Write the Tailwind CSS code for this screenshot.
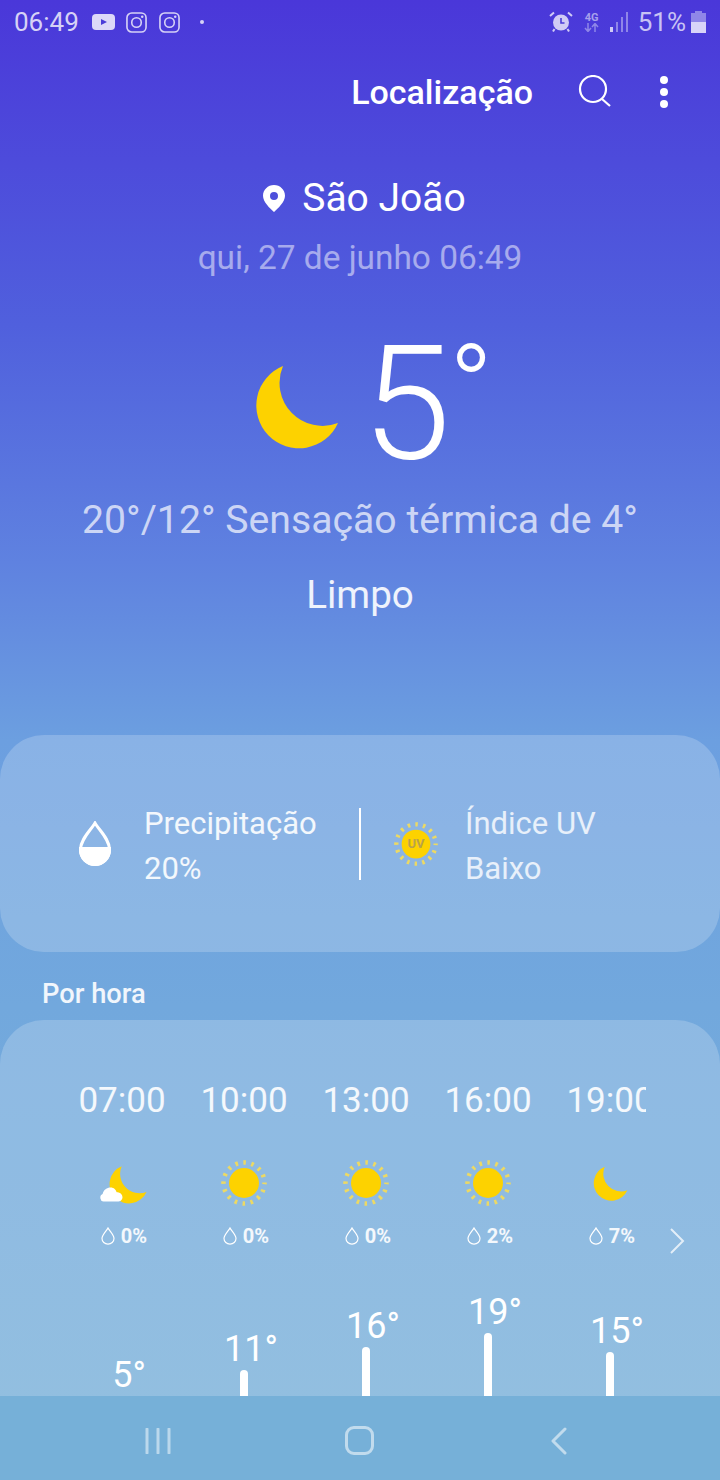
<!DOCTYPE html>
<html lang="pt">
  <head>
    <meta charset="UTF-8" />
    <title>Localização</title>
    <script src="https://cdn.jsdelivr.net/npm/@tailwindcss/browser@4"></script>
  </head>
  <body class="font-['Roboto',sans-serif] text-white">
    <svg class="hidden">
      <defs>
        <symbol id="sun" viewBox="0 0 48 48">
          <circle cx="24" cy="24" r="20.5" fill="none" stroke="#ecd964" stroke-width="4.5" stroke-dasharray="2.6 5.45" stroke-dashoffset="1.3" />
          <circle cx="24" cy="24" r="15" fill="#fdd200" />
        </symbol>
        <symbol id="moon" viewBox="-2 -1 84 85">
          <path d="M26 1A42.700 42.700 0 1 0 81 58A43 43 0 0 1 26 1Z" fill="#fdd200" />
        </symbol>
        <symbol id="drop" viewBox="0 0 14 18">
          <path d="M7 1C5.500 4 1 8 1 11.500A6 5.600 0 0 0 13 11.500C13 8 8.500 4 7 1Z" fill="none" stroke="white" stroke-width="1.200" />
        </symbol>
        <symbol id="insta" viewBox="0 0 22 22">
          <rect x="1" y="1" width="20" height="20" rx="5" fill="none" stroke="#d6d2f6" stroke-width="1.700" />
          <circle cx="11" cy="11" r="5" fill="none" stroke="#d6d2f6" stroke-width="1.700" />
          <circle cx="17" cy="5" r="1.300" fill="#d6d2f6" />
        </symbol>
      </defs>
    </svg>

    <div class="relative w-[720px] h-[1480px] overflow-hidden flex flex-col bg-[linear-gradient(180deg,#4a37d9_0%,#5060dd_22%,#5f82e0_38%,#6c9fe0_50%,#72a8dd_68%,#78b0d8_100%)]">
      <!-- status bar -->
      <div class="h-[44px] shrink-0 flex items-center justify-between pl-[14px] pr-[14px] text-[#d6d2f6]">
        <div class="flex items-center">
          <span class="text-[26px] leading-none">06:49</span>
          <svg class="ml-[13px] w-[23px] h-[16px]" viewBox="0 0 23 16">
            <rect width="23" height="16" rx="4" fill="#dcd8f8" />
            <path d="M9 5L15 8L9 11Z" fill="#4a3cd8" />
          </svg>
          <svg class="ml-[11px] w-[21px] h-[21px]"><use href="#insta" /></svg>
          <svg class="ml-[12px] w-[21px] h-[21px]"><use href="#insta" /></svg>
          <span class="ml-[20px] w-[4px] h-[4px] rounded-full bg-[#d6d2f6]"></span>
        </div>
        <div class="flex items-center">
          <svg class="w-[24px] h-[22px]" viewBox="0 0 24 22">
            <circle cx="12" cy="11.500" r="8" fill="#d0cbf5" />
            <path d="M12 7V12H15.500" fill="none" stroke="#4a3cd8" stroke-width="1.600" />
            <path d="M1 5L5 1.500M23 5L19 1.500M5.500 18L4 20.500M18.500 18L20 20.500" stroke="#d0cbf5" stroke-width="2" />
          </svg>
          <div class="ml-[11px] w-[16px] flex flex-col items-center">
            <span class="text-[11px] leading-[11px] font-bold text-[#a7a0ec]">4G</span>
            <svg class="w-[15px] h-[9px]" viewBox="0 0 15 9">
              <path d="M4 0V8M1 5L4 8.500L7 5M11 9V1M8 4L11 .5L14 4" fill="none" stroke="#8f86e8" stroke-width="1.500" />
            </svg>
          </div>
          <svg class="ml-[9px] w-[20px] h-[22px]" viewBox="0 0 20 22">
            <rect x="1" y="16" width="3" height="5" fill="#d0cbf5" />
            <rect x="7" y="11" width="2" height="10" fill="#8f86e8" />
            <rect x="12" y="6" width="2" height="15" fill="#8f86e8" />
            <rect x="17" y="1" width="2" height="20" fill="#8f86e8" />
          </svg>
          <span class="ml-[9px] text-[26px] leading-none text-[#c8c3f4]">51%</span>
          <svg class="ml-[5px] w-[15px] h-[22px]" viewBox="0 0 15 22">
            <path d="M4 0H11V2H15V22H0V2H4Z" fill="#8f86e8" />
            <rect y="11" width="15" height="11" fill="#d8d4f8" />
          </svg>
        </div>
      </div>

      <main class="flex-1 min-h-0 overflow-hidden flex flex-col">
        <!-- toolbar -->
        <div class="h-[96px] shrink-0 flex items-center justify-end pr-[52px]">
          <h1 class="text-[34px] font-medium leading-none mr-[45px]">Localização</h1>
          <svg class="w-[34px] h-[34px] mr-[48px]" viewBox="0 0 34 34">
            <circle cx="15" cy="14" r="13" fill="none" stroke="white" stroke-width="2.200" />
            <path d="M24 24L32 31" stroke="white" stroke-width="2.200" />
          </svg>
          <div class="flex flex-col gap-[4px]">
            <span class="w-[8px] h-[8px] rounded-full bg-white"></span>
            <span class="w-[8px] h-[8px] rounded-full bg-white"></span>
            <span class="w-[8px] h-[8px] rounded-full bg-white"></span>
          </div>
        </div>

        <!-- current weather -->
        <div class="flex justify-center items-center mt-[37px] h-[42px] pl-[9px]">
          <svg class="w-[22px] h-[27px] mr-[17px]" viewBox="0 0 22 27">
            <path fill-rule="evenodd" d="M11 0C4.900 0 0 4.800 0 10.800C0 17 7 23.500 11 27C15 23.500 22 17 22 10.800C22 4.800 17.100 0 11 0ZM11 7A4 4 0 1 1 11 15A4 4 0 1 1 11 7Z" fill="white" />
          </svg>
          <span class="text-[39px] leading-none">São João</span>
        </div>
        <p class="mt-[19px] text-center text-[33.400px] leading-[40px] text-white/50">qui, 27 de junho 06:49</p>
        <div class="mt-[54px] h-[148px] flex items-start pl-[255px]">
          <svg class="w-[84px] h-[85px] mt-[32px] mr-[23px]"><use href="#moon" /></svg>
          <span class="text-[160px] leading-[144px] font-light">5</span>
          <span class="-ml-[2px] mt-[2px] text-[118px] leading-[110px] font-light">°</span>
        </div>
        <p class="mt-[15px] text-center text-[39.200px] leading-[50px] text-white/70">20°/12° Sensação térmica de 4°</p>
        <p class="mt-[25px] text-center text-[38.600px] leading-[50px] text-white/90">Limpo</p>

        <!-- precipitation / uv -->
        <section class="mt-[115px] h-[217px] shrink-0 rounded-[44px] bg-white/20 flex items-center">
          <div class="w-[359px] flex items-center pl-[79px]">
            <svg class="w-[32px] h-[45px]" viewBox="0 0 32 45">
              <path d="M16 2C12 9 1.500 18 1.500 28.500A14.500 15 0 0 0 30.500 28.500C30.500 18 20 9 16 2Z" fill="none" stroke="white" stroke-width="3" />
              <path d="M0 26H32V29A16 16 0 0 1 0 29Z" fill="white" />
            </svg>
            <div class="ml-[33px] mt-[5px] text-[31px] leading-[45px] text-white/90">
              <p>Precipitação</p>
              <p>20%</p>
            </div>
          </div>
          <div class="w-[2px] h-[72px] bg-white"></div>
          <div class="flex items-center pl-[32px]">
            <div class="relative w-[46px] h-[46px] flex items-center justify-center">
              <svg class="absolute inset-0 w-[46px] h-[46px]"><use href="#sun" /></svg>
              <span class="relative text-[13px] font-bold text-[#b9a24a]">UV</span>
            </div>
            <div class="ml-[26px] mt-[5px] text-[31px] leading-[45px] text-white/80">
              <p>Índice UV</p>
              <p>Baixo</p>
            </div>
          </div>
        </section>

        <h2 class="mt-[27px] ml-[42px] text-[27.300px] leading-[30px] font-medium text-white/90">Por hora</h2>

        <!-- hourly -->
        <section class="mt-[11px] flex-1 rounded-t-[44px] bg-white/20 relative overflow-hidden pl-[61px] pt-[59px]">
          <div class="w-[585px] overflow-hidden">
            <div class="grid grid-cols-[repeat(5,122px)] w-[610px] justify-items-center text-white/90">
              <span class="text-[35px] leading-[44px]">07:00</span>
              <span class="text-[35px] leading-[44px]">10:00</span>
              <span class="text-[35px] leading-[44px]">13:00</span>
              <span class="text-[35px] leading-[44px]">16:00</span>
              <span class="text-[35px] leading-[44px]">19:00</span>

              <div class="relative mt-[36px] w-[48px] h-[48px]">
                <svg class="absolute left-[11px] top-[6px] w-[38px] h-[39px]"><use href="#moon" /></svg>
                <svg class="absolute left-[0px] top-[28px] w-[26px] h-[15px]" viewBox="0 0 27 17">
                  <path d="M5 16.500A4.500 4.500 0 0 1 4 8C5 3 9 .5 13 .5C17 .5 19 3 20 6C24 6 26.500 8.500 26.500 11.500C26.500 14.500 24 16.500 21 16.500Z" fill="white" />
                </svg>
              </div>
              <svg class="mt-[36px] w-[48px] h-[48px]"><use href="#sun" /></svg>
              <svg class="mt-[36px] w-[48px] h-[48px]"><use href="#sun" /></svg>
              <svg class="mt-[36px] w-[48px] h-[48px]"><use href="#sun" /></svg>
              <div class="mt-[36px] w-[48px] h-[48px] flex items-center justify-center">
                <svg class="w-[35px] h-[35px]"><use href="#moon" /></svg>
              </div>

              <div class="mt-[16px] pl-[4px] flex items-center gap-[6px] text-[20px] leading-[26px] font-bold text-white/90"><svg class="w-[14px] h-[18px]"><use href="#drop" /></svg>0%</div>
              <div class="mt-[16px] pl-[4px] flex items-center gap-[6px] text-[20px] leading-[26px] font-bold text-white/90"><svg class="w-[14px] h-[18px]"><use href="#drop" /></svg>0%</div>
              <div class="mt-[16px] pl-[4px] flex items-center gap-[6px] text-[20px] leading-[26px] font-bold text-white/90"><svg class="w-[14px] h-[18px]"><use href="#drop" /></svg>0%</div>
              <div class="mt-[16px] pl-[4px] flex items-center gap-[6px] text-[20px] leading-[26px] font-bold text-white/90"><svg class="w-[14px] h-[18px]"><use href="#drop" /></svg>2%</div>
              <div class="mt-[16px] pl-[4px] flex items-center gap-[6px] text-[20px] leading-[26px] font-bold text-white/90"><svg class="w-[14px] h-[18px]"><use href="#drop" /></svg>7%</div>
            </div>
            <!-- temperature chart -->
            <div class="grid grid-cols-[repeat(5,122px)] w-[610px] h-[147px] items-end justify-items-center">
              <div class="flex flex-col items-center">
                <span class="text-[36px] leading-[36px] pl-[14px]">5°</span>
                <div class="mt-[3px] w-[8px] h-0"></div>
              </div>
              <div class="flex flex-col items-center">
                <span class="text-[36px] leading-[36px] pl-[14px]">11°</span>
                <div class="mt-[3px] w-[8px] h-[26px] rounded-t-full bg-white"></div>
              </div>
              <div class="flex flex-col items-center">
                <span class="text-[36px] leading-[36px] pl-[14px]">16°</span>
                <div class="mt-[3px] w-[8px] h-[49px] rounded-t-full bg-white"></div>
              </div>
              <div class="flex flex-col items-center">
                <span class="text-[36px] leading-[36px] pl-[14px]">19°</span>
                <div class="mt-[3px] w-[8px] h-[63px] rounded-t-full bg-white"></div>
              </div>
              <div class="flex flex-col items-center">
                <span class="text-[36px] leading-[36px] pl-[14px]">15°</span>
                <div class="mt-[3px] w-[8px] h-[44px] rounded-t-full bg-white"></div>
              </div>
            </div>
          </div>
          <svg class="absolute left-[668px] top-[207px] w-[18px] h-[28px]" viewBox="0 0 18 28">
            <path d="M3 2L15 14L3 26" fill="none" stroke="white" stroke-opacity=".75" stroke-width="2" />
          </svg>
        </section>
      </main>

      <!-- nav bar -->
      <nav class="h-[84px] shrink-0 bg-[#76b0d8] flex items-center pl-[145px] pt-[5px]">
        <svg class="w-[26px] h-[26px]" viewBox="0 0 26 26">
          <path d="M2 1V25M13 1V25M24 1V25" stroke="white" stroke-opacity=".5" stroke-width="3" stroke-linecap="round" />
        </svg>
        <div class="ml-[174px] w-[29px] h-[29px] rounded-[9px] border-[3px] border-white/55"></div>
        <svg class="ml-[176px] w-[18px] h-[28px]" viewBox="0 0 18 28">
          <path d="M15 2L3 14L15 26" fill="none" stroke="white" stroke-opacity=".55" stroke-width="3" stroke-linecap="round" stroke-linejoin="round" />
        </svg>
      </nav>
    </div>
  </body>
</html>
